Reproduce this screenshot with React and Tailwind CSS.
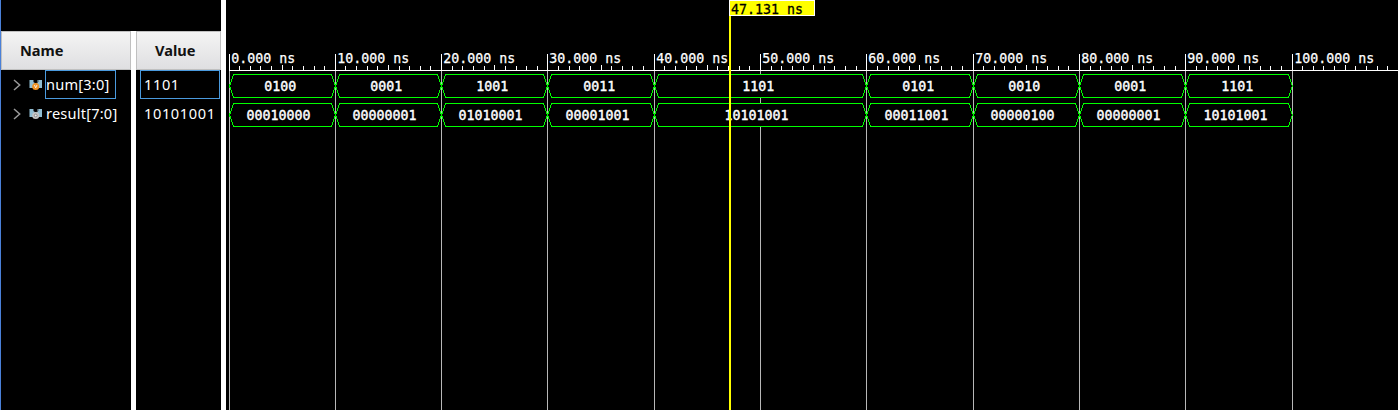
const P = 10.63;
const X0 = 3;
const tickX = (i) => X0 + Math.floor(P * i + 0.001);
const MONO = 'font-["DejaVu_Sans_Mono",monospace] text-[13.29px] leading-[17px] whitespace-pre';

const SEGMENTS = [
  [0, 1, '0100', '00010000'],
  [1, 2, '0001', '00000001'],
  [2, 3, '1001', '01010001'],
  [3, 4, '0011', '00001001'],
  [4, 6, '1101', '10101001'],
  [6, 7, '0101', '00011001'],
  [7, 8, '0010', '00000100'],
  [8, 9, '0001', '00000001'],
  [9, 10, '1101', '10101001'],
];

function Bus({ top, field }) {
  return SEGMENTS.map((s) => {
    const a = tickX(s[0] * 10) + 0.5;
    const b = tickX(s[1] * 10) + 0.5;
    const t = top + 0.5;
    const m = top + 12;
    const e = top + 23.5;
    const inset = field === 2 ? 17.7 : 35.5;
    return (
      <g key={s[0]}>
        <polygon
          points={`${a},${m} ${a + 4},${t} ${b - 4},${t} ${b},${m} ${b - 4},${e} ${a + 4},${e}`}
          fill="#000"
          stroke="#00ff00"
          strokeWidth="1"
          shapeRendering="crispEdges"
        />
        <text
          x={Math.floor((a + b) / 2) - inset}
          y={top + 17}
          fill="#fff"
          stroke="#fff"
          strokeWidth="0.4"
          className='font-["DejaVu_Sans_Mono",monospace] text-[13.29px]'
        >
          {s[field]}
        </text>
      </g>
    );
  });
}

function SignalIcon({ kind }) {
  return (
    <svg width="14" height="12" viewBox="0 0 14 12" className="shrink-0">
      <path d="M0.5 1H5V4H8.5V1H13V9H0.5Z" fill="#8fbdd3" />
      <path d="M4.5 1V3L6.7 5L9 3V1" fill="none" stroke="#4c565c" />
      <circle cx="6.7" cy="7.5" r="3.5" fill={kind === 'var' ? '#ee9224' : '#c4c4c4'} />
      {kind === 'var' ? (
        <path d="M5.4 6L6.7 8.8L8 6" fill="none" stroke="#fff" strokeWidth="0.8" />
      ) : (
        <circle cx="6.7" cy="7.5" r="1.4" fill="#eee" stroke="#777" strokeWidth="0.8" />
      )}
    </svg>
  );
}

function SignalRow({ name, kind, selected }) {
  return (
    <div className="flex h-[29px] items-center pl-3">
      <svg width="8" height="12" viewBox="0 0 8 12" fill="none" stroke="#999" strokeWidth="1.5" className="shrink-0">
        <path d="M1 1L6.7 6L1 11" />
      </svg>
      <span className="ml-2 flex"><SignalIcon kind={kind} /></span>
      <span
        className={`ml-0.5 flex h-[29px] items-center border pr-[5px] tracking-[0.2px] ${selected ? 'w-[71px] border-[#4a9ade]' : 'border-transparent'}`}
      >
        {name}
      </span>
    </div>
  );
}

const HEADER =
  'flex h-[39px] items-center border border-[#c0c0c0] bg-linear-to-b from-[#f4f4f4] to-[#dfdfe1] font-bold text-[#111]';

export default function App() {
  return (
    <div className='flex h-[410px] w-[1398px] overflow-hidden bg-black font-["Noto_Sans",sans-serif] text-[14.6px] text-white'>
      <div className="flex w-[221px] shrink-0 border-l border-[#4a80d8] pt-[31px]">
        <div className="w-[130px] shrink-0">
          <div className={`${HEADER} pl-[18px]`}>Name</div>
          <SignalRow name="num[3:0]" kind="var" selected />
          <SignalRow name="result[7:0]" kind="net" />
        </div>
        <div className="w-[5px] shrink-0 bg-white" />
        <div className="w-[85px] shrink-0">
          <div className={`${HEADER} pl-[18px]`}>Value</div>
          <div className="ml-1 flex h-[29px] w-20 items-center border border-[#4a9ade] pl-[3px] tracking-[0.6px]">1101</div>
          <div className="ml-1 flex h-[29px] w-20 items-center pl-1 tracking-[0.6px]">10101001</div>
        </div>
      </div>
      <div className="w-[5px] shrink-0 bg-white" />
      <div className="relative w-[1172px] shrink-0">
        <svg width="1172" height="410" className="block">
          {Array.from({ length: 110 }, (_, i) => {
            const major = i % 10 === 0;
            const y = major ? 54 : i % 5 === 0 ? 65 : 66;
            return (
              <g key={i}>
                <rect x={tickX(i)} y={y} width="1" height={70 - y} fill="#fff" />
                {major && <rect x={tickX(i)} y="71" width="1" height="339" fill="#b8b8b8" />}
              </g>
            );
          })}
          <rect x="3" y="70" width="1169" height="1" fill="#fff" />
          {Array.from({ length: 11 }, (_, i) => (
            <text
              key={i}
              x={tickX(i * 10) + 2.2}
              y="63"
              fill="#fff"
              stroke="#fff"
              strokeWidth="0.25"
              className='font-["DejaVu_Sans_Mono",monospace] text-[13.29px]'
            >
              {i === 0 ? '0.000 ns' : `${i * 10}.000 ns`}
            </text>
          ))}
          <Bus top={74} field={2} />
          <Bus top={103} field={3} />
          <rect x="503" y="0" width="2" height="410" fill="#ff0" />
        </svg>
        <div className="absolute top-0 left-[503px] flex h-4 w-[86px] border border-white bg-[#ff0] pl-px">
          <span className={`text-black [-webkit-text-stroke:0.3px_black] ${MONO}`}>47.131 ns</span>
        </div>
      </div>
    </div>
  );
}
